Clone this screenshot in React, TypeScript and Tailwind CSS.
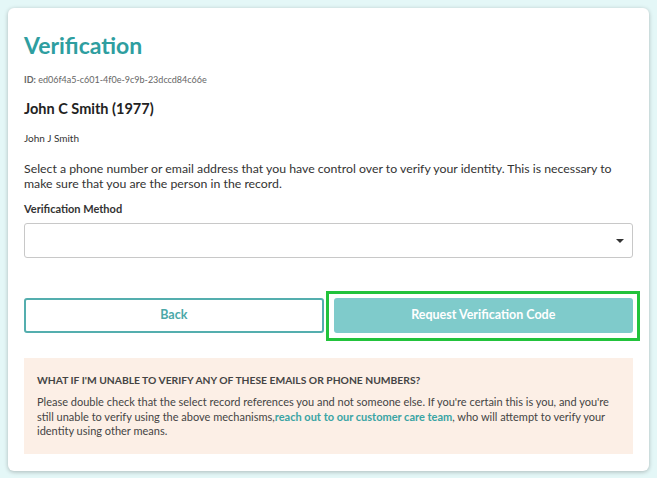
import { useState } from 'react'

export default function App() {
  const [method, setMethod] = useState('')

  return (
    <div
      className="min-h-[478px] w-full bg-[#e4f7f7] p-2"
      style={{ fontFamily: '"Source Sans Pro", Lato, "Noto Sans", sans-serif' }}
    >
      <div className="rounded-md bg-white px-4 pt-[23px] pb-[17px] shadow-[0_1px_4px_rgba(0,0,0,0.25)]">
        <h1 className="text-[23px] leading-[28px] font-bold text-[#2e9ea0]">Verification</h1>
        <p className="mt-[15px] text-[9px] leading-[12px] text-[#666]">
          <span className="font-bold">ID:</span> ed06f4a5-c601-4f0e-9c9b-23dccd84c66e
        </p>
        <h2 className="mt-[14px] text-[14.5px] leading-[18px] font-bold text-[#222]">John C Smith (1977)</h2>
        <p className="mt-[14px] text-[10px] leading-[12px] text-[#333]">John J Smith</p>
        <p className="mt-[17px] text-[12.3px] leading-[15px] text-[#333]">
          Select a phone number or email address that you have control over to verify your identity. This is
          necessary to make sure that you are the person in the record.
        </p>
        <label className="mt-[11px] block text-[11px] leading-[14px] font-bold text-[#333]">Verification Method</label>
        <div className="relative mt-[7px]">
          <select
            className="h-[35px] w-full appearance-none rounded-[3px] border border-[#c8c8c8] bg-white px-3 text-[12px] text-[#333] outline-none"
            onChange={(e) => setMethod(e.target.value)}
            value={method}
          >
            <option value="" />
            <option value="phone">Phone</option>
            <option value="email">Email</option>
          </select>
          <svg
            className="pointer-events-none absolute top-[16px] right-[9px]"
            height="4"
            viewBox="0 0 8 4"
            width="8"
          >
            <path d="M0 0h8L4 4z" fill="#333" />
          </svg>
        </div>

        <div className="mt-[40px] grid grid-cols-2 gap-[10px]">
          <button
            className="h-[35px] rounded-[3px] border-2 border-[#54aeae] bg-white text-[12.5px] font-bold text-[#4aa8a8]"
            type="button"
          >
            Back
          </button>
          <div className="relative">
            <button
              className="h-[35px] w-full rounded-[3px] bg-[#7fcbcb] text-[12.5px] font-bold text-white"
              type="button"
            >
              Request Verification Code
            </button>
            <div className="pointer-events-none absolute -top-[7px] -right-[7px] -bottom-[8px] -left-[8px] border-[3px] border-[#22c33c]" />
          </div>
        </div>

        <div className="mt-[25px] bg-[#fcefe6] px-[13px] pt-[15px] pb-[15px] text-[#444]">
          <p className="text-[10.3px] leading-[14px] font-bold">
            WHAT IF I'M UNABLE TO VERIFY ANY OF THESE EMAILS OR PHONE NUMBERS?
          </p>
          <p className="mt-[8px] text-[11px] leading-[14.5px]">
            Please double check that the select record references you and not someone else. If you're certain this
            is you, and you're still unable to verify using the above mechanisms,
            <a className="font-bold text-[#3aa4a4]" href="#">
              reach out to our customer care team
            </a>
            , who will attempt to verify your identity using other means.
          </p>
        </div>
      </div>
    </div>
  )
}
